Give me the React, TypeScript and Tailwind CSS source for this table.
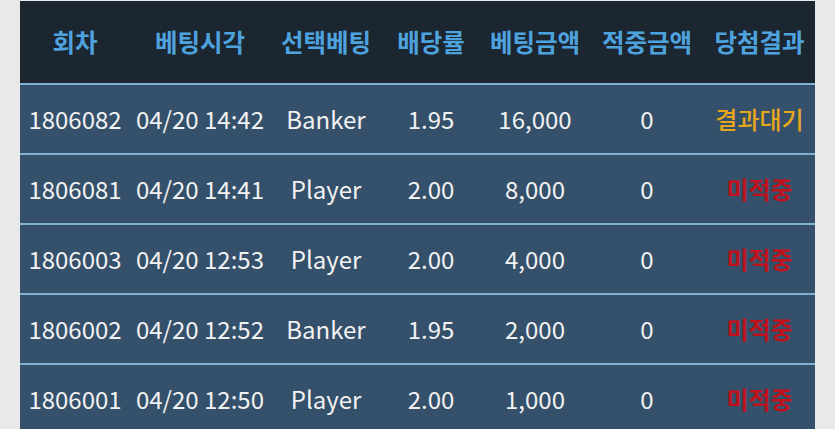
import React from "react";

const rows = [
  { id: "1806082", time: "04/20 14:42", pick: "Banker", odds: "1.95", amt: "16,000", win: "0", res: "결과대기", pending: true },
  { id: "1806081", time: "04/20 14:41", pick: "Player", odds: "2.00", amt: "8,000", win: "0", res: "미적중", pending: false },
  { id: "1806003", time: "04/20 12:53", pick: "Player", odds: "2.00", amt: "4,000", win: "0", res: "미적중", pending: false },
  { id: "1806002", time: "04/20 12:52", pick: "Banker", odds: "1.95", amt: "2,000", win: "0", res: "미적중", pending: false },
  { id: "1806001", time: "04/20 12:50", pick: "Player", odds: "2.00", amt: "1,000", win: "0", res: "미적중", pending: false },
];

const headers = ["회차", "베팅시각", "선택베팅", "배당률", "베팅금액", "적중금액", "당첨결과"];

const grid = "grid grid-cols-[110px_140px_112px_98px_110px_114px_111px]";

export default function App() {
  return (
    <div
      className="w-[835px] h-[429px] overflow-hidden bg-[#e9e9e9] pl-[20px] pt-[1px]"
      style={{ fontFamily: '"Noto Sans CJK KR", "Noto Sans", sans-serif' }}
    >
      <div className="w-[795px]">
        <div className={`${grid} h-[82px] bg-[#1b2631] items-center`}>
          {headers.map((h) => (
            <div key={h} className="text-center text-[24.5px] font-bold text-[#4ea2de] leading-none">
              {h}
            </div>
          ))}
        </div>
        {rows.map((r) => (
          <div key={r.id} className={`${grid} h-[70px] bg-[#34506a] border-t-2 border-[#7fb1d3] items-center text-[24px] text-[#f2f2f2] leading-none`}>
            <div className="text-center">{r.id}</div>
            <div className="text-center">{r.time}</div>
            <div className="text-center">{r.pick}</div>
            <div className="text-center">{r.odds}</div>
            <div className="text-center">{r.amt}</div>
            <div className="text-center">{r.win}</div>
            <div className={`text-center ${r.pending ? "text-[24px] font-medium text-[#e8a61c]" : "text-[24px] text-[#c0121c] font-bold"}`}>{r.res}</div>
          </div>
        ))}
      </div>
    </div>
  );
}
